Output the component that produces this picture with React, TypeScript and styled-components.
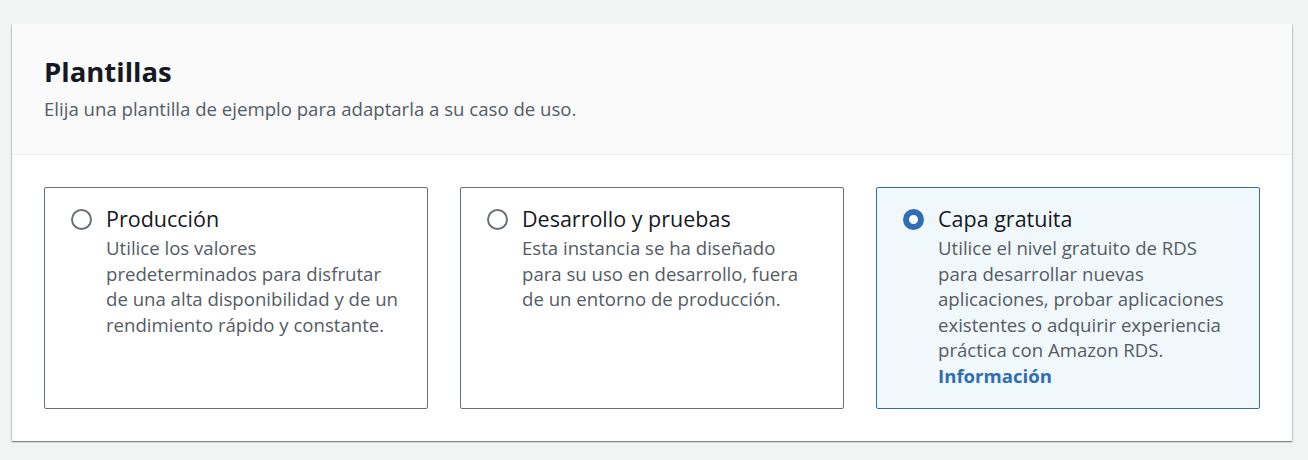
import React from "react";
import styled, { createGlobalStyle } from "styled-components";

const Global = createGlobalStyle`
  html, body { margin: 0; padding: 0; background: #f2f3f3; }
  body { font-family: "Open Sans", "Noto Sans", Arial, sans-serif; -webkit-font-smoothing: antialiased; }
  * { box-sizing: border-box; }
`;

const Page = styled.div`
  padding: 24px 16px 19px 12px;
`;

const Container = styled.section`
  background: #ffffff;
  box-shadow: 0 1px 1px 0 rgba(0, 28, 36, 0.3), 1px 1px 1px 0 rgba(0, 28, 36, 0.15),
    -1px 1px 1px 0 rgba(0, 28, 36, 0.15);
`;

const Header = styled.header`
  background: #fafafa;
  border-bottom: 1px solid #eaeded;
  padding: 32px 32px 33px;
`;

const Title = styled.h2`
  margin: 0;
  font-size: 27.5px;
  line-height: 32px;
  font-weight: 700;
  color: #16191f;
`;

const Subtitle = styled.p`
  margin: 8px 0 0;
  font-size: 18.6px;
  line-height: 25px;
  color: #545b64;
`;

const Body = styled.div`
  padding: 32px;
`;

const Tiles = styled.div`
  display: grid;
  grid-template-columns: repeat(3, 1fr);
  gap: 32px;
`;

const Tile = styled.label<{ $selected?: boolean }>`
  display: flex;
  align-items: flex-start;
  gap: 14px;
  min-height: 222px;
  padding: 18px 20px 18px 26px;
  border: 1px solid ${(p) => (p.$selected ? "#2f6db4" : "#687078")};
  border-radius: 2px;
  background: ${(p) => (p.$selected ? "#f1f8fc" : "#ffffff")};
  cursor: pointer;
`;

const Radio = styled.span<{ $checked?: boolean }>`
  flex: none;
  width: 21px;
  height: 21px;
  margin-top: 3px;
  border-radius: 50%;
  border: ${(p) => (p.$checked ? "6.5px solid #2f6db4" : "2px solid #687078")};
  background: #ffffff;
`;

const Content = styled.div`
  display: flex;
  flex-direction: column;
  gap: 3px;
`;

const TileTitle = styled.span`
  font-size: 21.5px;
  line-height: 26px;
  color: #16191f;
`;

const TileDesc = styled.span`
  font-size: 18.6px;
  line-height: 25.5px;
  color: #545b64;
`;

const Line = styled.span`
  display: block;
  white-space: nowrap;
`;

const InfoLink = styled.a`
  display: block;
  font-weight: 700;
  color: #2f6db4;
  text-decoration: none;
`;

const tiles = [
  {
    title: "Producción",
    lines: [
      "Utilice los valores",
      "predeterminados para disfrutar",
      "de una alta disponibilidad y de un",
      "rendimiento rápido y constante.",
    ],
  },
  {
    title: "Desarrollo y pruebas",
    lines: [
      "Esta instancia se ha diseñado",
      "para su uso en desarrollo, fuera",
      "de un entorno de producción.",
    ],
  },
  {
    title: "Capa gratuita",
    lines: [
      "Utilice el nivel gratuito de RDS",
      "para desarrollar nuevas",
      "aplicaciones, probar aplicaciones",
      "existentes o adquirir experiencia",
      "práctica con Amazon RDS.",
    ],
    info: true,
    selected: true,
  },
];

export default function App() {
  return (
    <>
      <Global />
      <Page>
        <Container>
          <Header>
            <Title>Plantillas</Title>
            <Subtitle>Elija una plantilla de ejemplo para adaptarla a su caso de uso.</Subtitle>
          </Header>
          <Body>
            <Tiles>
              {tiles.map((t) => (
                <Tile key={t.title} $selected={t.selected}>
                  <Radio $checked={t.selected} />
                  <Content>
                    <TileTitle>{t.title}</TileTitle>
                    <TileDesc>
                      {t.lines.map((l) => (
                        <Line key={l}>{l}</Line>
                      ))}
                      {t.info && <InfoLink href="#">Información</InfoLink>}
                    </TileDesc>
                  </Content>
                </Tile>
              ))}
            </Tiles>
          </Body>
        </Container>
      </Page>
    </>
  );
}
